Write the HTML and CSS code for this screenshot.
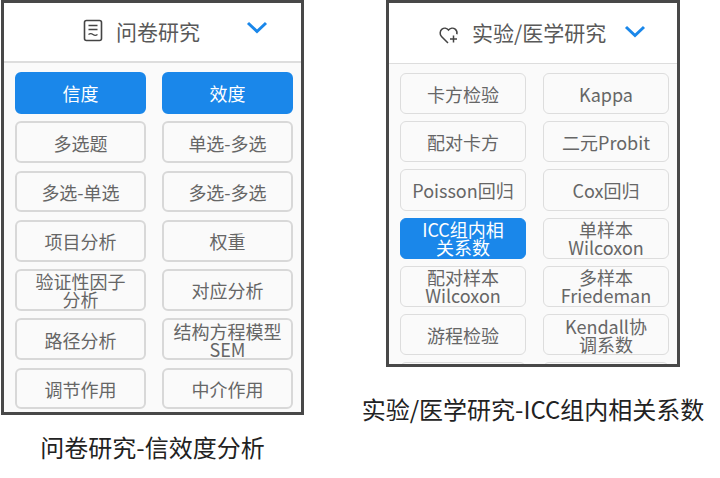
FILE: index.html
```html
<!DOCTYPE html>
<html lang="zh-CN">
<head>
    <meta charset="UTF-8">
    <title>问卷研究 / 实验医学研究</title>
    <link rel="stylesheet" href="styles.css">
</head>
<body>

    <div class="figure figure-left">
        <div class="panel">
            <div class="panel-header">
                <svg class="header-icon" width="20" height="23" viewBox="0 0 20 23" fill="none" stroke="#444" stroke-width="1.6">
                    <rect x="1.5" y="1.5" width="17" height="20" rx="2"/>
                    <path d="M5.5 6.5h9M5.5 10.5h9"/>
                    <path d="M5.5 15.5c1.5-1.2 3-1.2 4.500 0s3 1.200 4.500 0" stroke-width="1.2"/>
                </svg>
                <span class="panel-title">问卷研究</span>
                <svg class="chevron" width="22" height="13" viewBox="0 0 22 13" fill="none" stroke="#1a87ea" stroke-width="3">
                    <path d="M2 2l9 8.500 9-8.500"/>
                </svg>
            </div>
            <div class="btn-grid">
                <div class="btn active">信度</div>
                <div class="btn active">效度</div>
                <div class="btn">多选题</div>
                <div class="btn">单选-多选</div>
                <div class="btn">多选-单选</div>
                <div class="btn">多选-多选</div>
                <div class="btn">项目分析</div>
                <div class="btn">权重</div>
                <div class="btn">验证性因子<br>分析</div>
                <div class="btn">对应分析</div>
                <div class="btn">路径分析</div>
                <div class="btn">结构方程模型<br>SEM</div>
                <div class="btn">调节作用</div>
                <div class="btn">中介作用</div>
            </div>
        </div>
        <p class="caption">问卷研究-信效度分析</p>
    </div>

    <div class="figure figure-right">
        <div class="panel">
            <div class="panel-header">
                <svg class="header-icon" width="20" height="19" viewBox="0 0 20 19" fill="none" stroke="#444" stroke-width="1.500">
                    <path d="M9 17L2.500 10.500C0.500 8.500 0.800 5 3 3.200 5 1.600 7.800 2 9.500 4 11.200 2 14.200 1.600 16.200 3.200 17.800 4.500 18.300 6.500 17.800 8.300"/>
                    <path d="M14.500 9.500v7M11 13h7"/>
                </svg>
                <span class="panel-title">实验/医学研究</span>
                <svg class="chevron" width="22" height="13" viewBox="0 0 22 13" fill="none" stroke="#1a87ea" stroke-width="3">
                    <path d="M2 2l9 8.500 9-8.500"/>
                </svg>
            </div>
            <div class="btn-grid">
                <div class="btn">卡方检验</div>
                <div class="btn">Kappa</div>
                <div class="btn">配对卡方</div>
                <div class="btn">二元Probit</div>
                <div class="btn">Poisson回归</div>
                <div class="btn">Cox回归</div>
                <div class="btn active">ICC组内相<br>关系数</div>
                <div class="btn">单样本<br>Wilcoxon</div>
                <div class="btn">配对样本<br>Wilcoxon</div>
                <div class="btn">多样本<br>Friedeman</div>
                <div class="btn">游程检验</div>
                <div class="btn">Kendall协<br>调系数</div>
                <div class="btn"></div>
                <div class="btn"></div>
            </div>
        </div>
        <p class="caption">实验/医学研究-ICC组内相关系数</p>
    </div>

</body>
</html>
```

FILE: styles.css
```css
body {
    font-family: "Noto Sans CJK SC", sans-serif;
    background-color: #ffffff;
    margin: 0;
    width: 720px;
    height: 478px;
    overflow: hidden;
    display: flex;
}
.figure {
    display: flex;
    flex-direction: column;
    align-items: center;
}
.figure-left {
    width: 303px;
    margin-left: 1px;
}
.figure-right {
    width: 294px;
    margin-left: 82px;
}
.panel {
    box-sizing: border-box;
    width: 100%;
    border: 3px solid #484848;
    background-color: #fafafa;
    overflow: hidden;
}
.figure-left .panel {
    height: 415px;
}
.figure-right .panel {
    height: 367px;
}
.panel-header {
    box-sizing: border-box;
    background-color: #ffffff;
    border-bottom: 2px solid #dddddd;
    display: flex;
    align-items: center;
    height: 60px;
    padding-bottom: 3px;
}
.figure-right .panel-header {
    height: 61px;
    border-bottom-width: 1px;
    padding-bottom: 2px;
}
.header-icon {
    flex: none;
    margin-right: 13px;
}
.figure-left .header-icon {
    margin-left: 79px;
}
.figure-right .header-icon {
    margin-left: 50px;
    margin-top: 7px;
    margin-right: 13px;
}
.panel-title {
    font-size: 21px;
    line-height: 30px;
    color: #595959;
}
.chevron {
    flex: none;
    margin-bottom: 6px;
}
.figure-left .chevron {
    margin-left: 46px;
}
.figure-right .chevron {
    margin-left: 18px;
    margin-bottom: 2px;
}
.btn-grid {
    display: grid;
    grid-template-columns: 131px 131px;
    column-gap: 16px;
    row-gap: 7.6px;
    padding: 9px 0 0 11px;
}
.figure-right .btn-grid {
    grid-template-columns: 126px 126px;
    column-gap: 17px;
    row-gap: 7px;
    padding: 9px 0 0 11px;
}
.btn {
    box-sizing: border-box;
    height: 41.700px;
    border: 2px solid #d8d8d8;
    border-radius: 6px;
    background-color: #fafafa;
    color: #666666;
    font-size: 18px;
    line-height: 18px;
    text-align: center;
    display: flex;
    align-items: center;
    justify-content: center;
    white-space: nowrap;
    padding-top: 1px;
}
.figure-right .btn {
    height: 41.200px;
    border-width: 1px;
    border-color: #dddddd;
    padding-top: 0;
}
.btn.active,
.figure-right .btn.active {
    background-color: #1a87ea;
    border-color: #1a87ea;
    color: #ffffff;
}
.caption {
    margin: 0;
    color: #222222;
    font-size: 24px;
    line-height: 32px;
    white-space: nowrap;
}
.figure-left .caption {
    margin-top: 16px;
}
.figure-right .caption {
    margin-top: 26px;
}
```
